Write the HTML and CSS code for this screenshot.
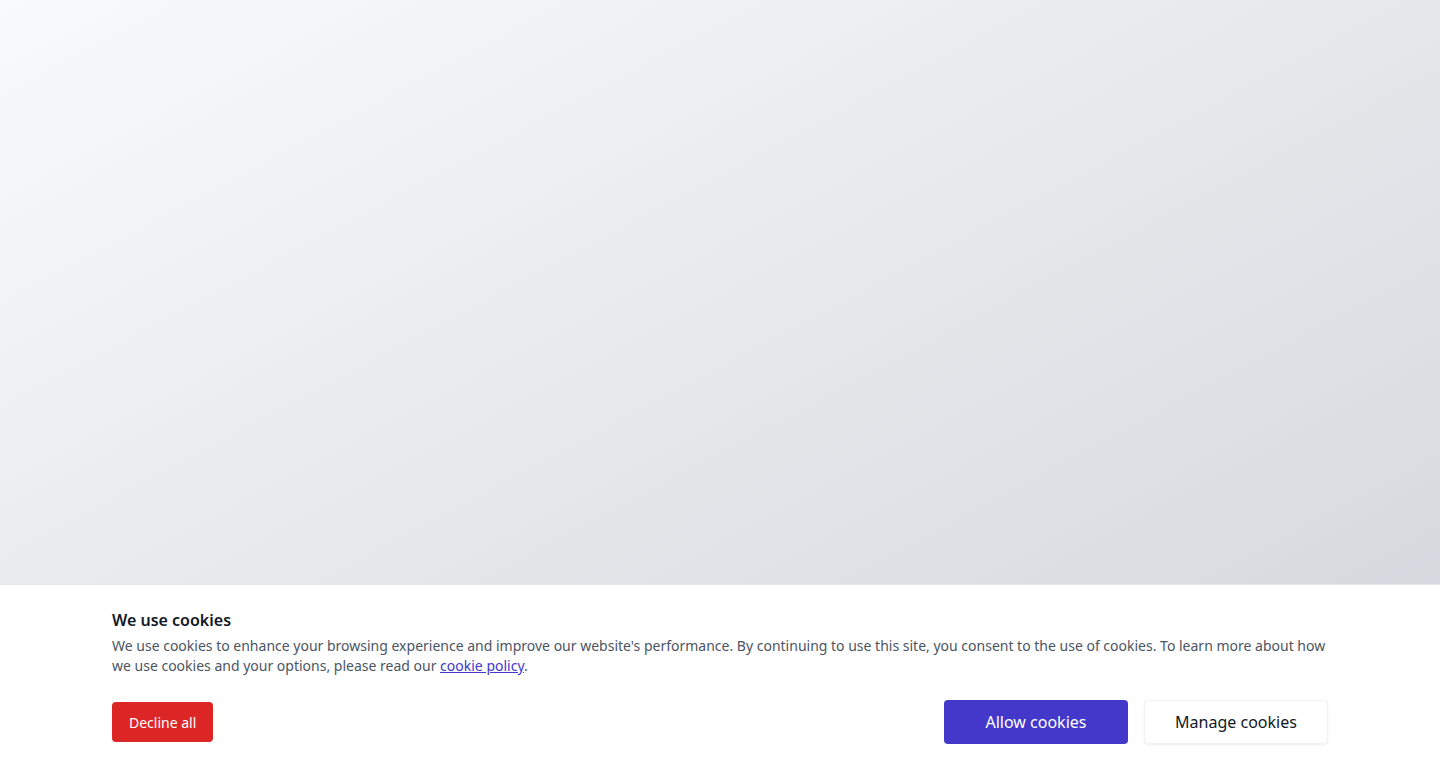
FILE: index.html
```html
<!DOCTYPE html>
<html lang="en">
<head>
<meta charset="utf-8">
<title>Cookies</title>
<link rel="stylesheet" href="styles.css">
</head>
<body>
<main class="page"></main>
<section class="banner">
  <div class="banner-inner">
    <h2 class="title">We use cookies</h2>
    <p class="text">We use cookies to enhance your browsing experience and improve our website's performance. By continuing to use this site, you consent to the use of cookies. To learn more about how we use cookies and your options, please read our <a href="#" class="link">cookie policy</a>.</p>
    <div class="actions">
      <button class="btn btn-decline">Decline all</button>
      <div class="right">
        <button class="btn btn-allow">Allow cookies</button>
        <button class="btn btn-manage">Manage cookies</button>
      </div>
    </div>
  </div>
</section>
</body>
</html>
```
FILE: styles.css
```css
html, body {
  margin: 0;
  height: 100%;
}
body {
  font-family: "Noto Sans", "Open Sans", sans-serif;
  background: linear-gradient(to bottom right, #f9fafb, #d1d5db);
  display: flex;
  flex-direction: column;
  overflow: hidden;
}
.page {
  flex: 1;
}
.banner {
  background: #ffffff;
  border-top: 1px solid #e5e7eb;
}
.banner-inner {
  max-width: 1216px;
  margin: 0 auto;
  padding: 23px 0 24px;
}
.title {
  margin: 0;
  font-size: 16px;
  line-height: 24px;
  font-weight: 600;
  color: #111827;
}
.text {
  margin: 4px 0 0;
  font-size: 14px;
  line-height: 20px;
  color: #4b5563;
}
.link {
  color: #4338ca;
  text-decoration: underline;
}
.actions {
  margin-top: 24px;
  display: flex;
  align-items: center;
  justify-content: space-between;
}
.right {
  display: flex;
  gap: 16px;
}
.btn {
  font-family: inherit;
  border: none;
  border-radius: 4px;
  cursor: pointer;
}
.btn-decline {
  background: #dc2626;
  color: #ffffff;
  font-size: 14px;
  height: 40px;
  padding: 0 17px;
}
.btn-allow {
  background: #4338ca;
  color: #ffffff;
  font-size: 16px;
  height: 44px;
  width: 184px;
}
.btn-manage {
  background: #ffffff;
  color: #111827;
  font-size: 16px;
  height: 44px;
  width: 184px;
  border: 1px solid #f0f1f3;
  box-shadow: 0 1px 2px rgba(0,0,0,0.08);
}
```
